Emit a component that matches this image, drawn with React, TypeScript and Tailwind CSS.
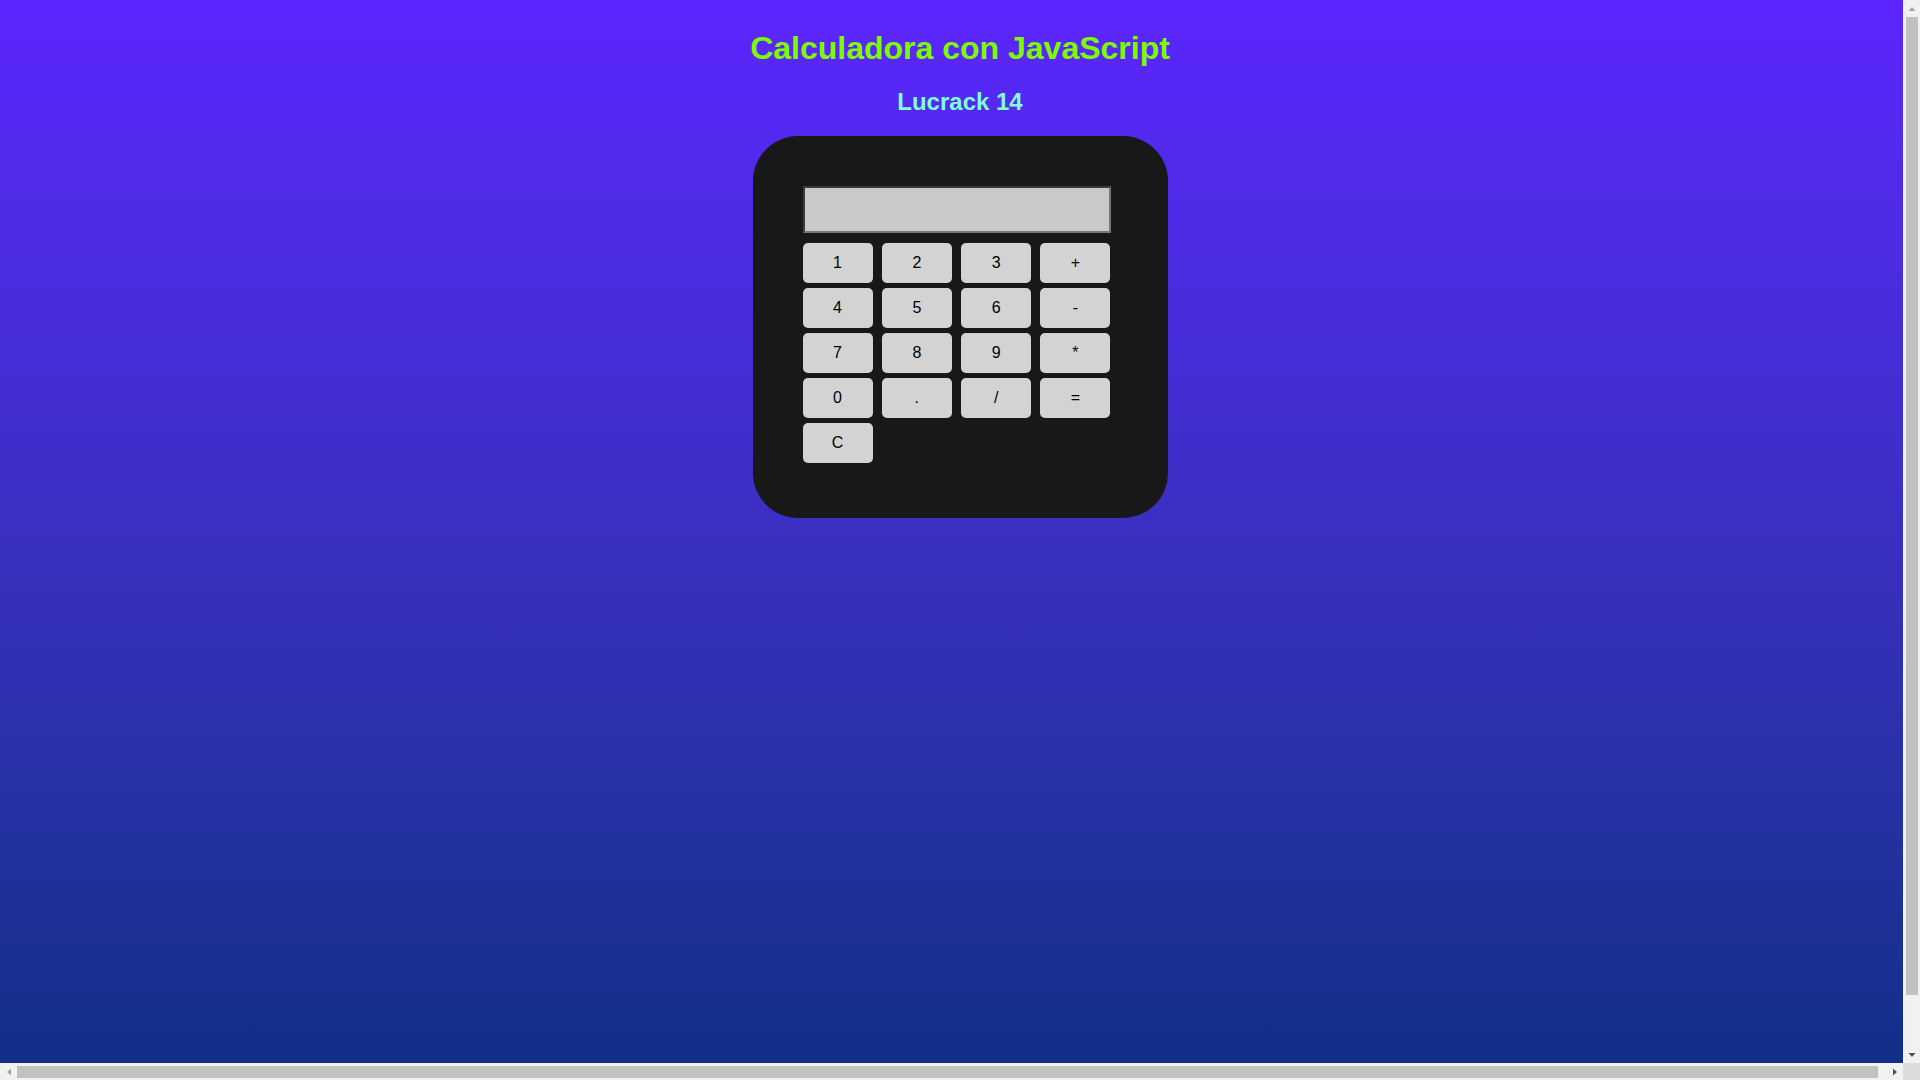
import React from "react";

const keys = ["1", "2", "3", "+", "4", "5", "6", "-", "7", "8", "9", "*", "0", ".", "/", "=", "C"];

function Tri({ dir, color }: { dir: "up" | "down" | "left" | "right"; color: string }) {
  const pts: Record<string, string> = {
    up: "0.5,6 7.5,6 4,2",
    down: "0.5,2 7.5,2 4,6",
    left: "6,0.5 6,7.5 2,4",
    right: "2,0.5 2,7.5 6,4",
  };
  return (
    <svg width="8" height="8" viewBox="0 0 8 8">
      <polygon points={pts[dir]} fill={color} />
    </svg>
  );
}

export default function App() {
  return (
    <div
      className="w-screen h-[1118px] bg-gradient-to-b from-[#5c25ff] to-[#0a2f82] pt-[30px] flex flex-col items-center"
      style={{ fontFamily: '"Liberation Sans", Arial, sans-serif' }}
    >
      <h1 className="text-[32px] leading-[37px] font-bold text-[#7cfc00] m-0">Calculadora con JavaScript</h1>
      <h2 className="text-[24px] leading-[28px] font-bold text-[#7fffd4] mt-[21px] mb-[20px]">Lucrack 14</h2>
      <div className="w-[415px] h-[382px] rounded-[45px] bg-[#181818] pt-[50px] pl-[50px]">
        <input
          type="text"
          readOnly
          className="block w-[308px] h-[47px] bg-[#cac8c8] border-2 border-t-[#3a3a3a] border-l-[#3a3a3a] border-b-[#767676] border-r-[#767676] outline-none"
        />
        <div className="mt-[10px] grid grid-cols-[repeat(4,70px)] gap-x-[9.33px] gap-y-[5px]">
          {keys.map((k) => (
            <button
              key={k}
              className="h-[40px] w-[70px] rounded-[5px] bg-[#d3d3d3] text-[16px] text-black flex items-center justify-center"
              style={{ fontFamily: '"Liberation Sans", Arial, sans-serif' }}
            >
              {k}
            </button>
          ))}
        </div>
      </div>

      {/* vertical scrollbar */}
      <div className="fixed top-0 right-0 w-[17px] h-[1063px] bg-[#f1f1f1] flex flex-col items-center">
        <div className="h-[17px] flex items-center justify-center">
          <Tri dir="up" color="#a3a3a3" />
        </div>
        <div className="w-[12px] h-[978px] bg-[#c1c1c1] ml-[1px]" />
        <div className="flex-1" />
        <div className="h-[17px] flex items-center justify-center">
          <Tri dir="down" color="#505050" />
        </div>
      </div>
      {/* horizontal scrollbar */}
      <div className="fixed bottom-0 left-0 w-[1903px] h-[17px] bg-[#f1f1f1] flex items-center">
        <div className="w-[17px] flex items-center justify-center">
          <Tri dir="left" color="#a3a3a3" />
        </div>
        <div className="h-[12px] w-[1861px] bg-[#c1c1c1] mt-[1px]" />
        <div className="flex-1" />
        <div className="w-[17px] flex items-center justify-center">
          <Tri dir="right" color="#505050" />
        </div>
      </div>
      <div className="fixed bottom-0 right-0 w-[17px] h-[17px] bg-[#dcdcdc]" />
    </div>
  );
}
